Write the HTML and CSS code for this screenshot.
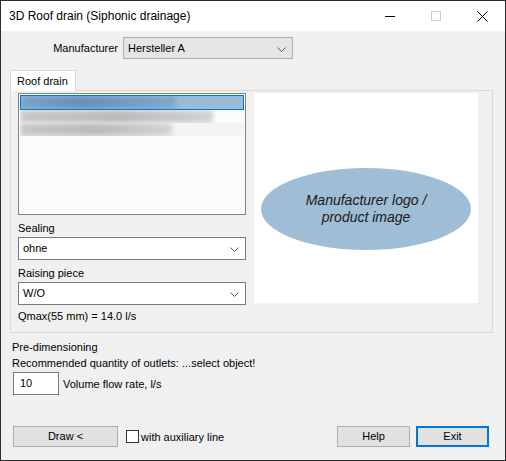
FILE: index.html
```html
<!DOCTYPE html>
<html>
<head>
<meta charset="UTF-8">
<title>3D Roof drain (Siphonic drainage)</title>
<link rel="stylesheet" href="styles.css">
</head>
<body>
<div class="window">
	<div class="titlebar">
		<div class="title">3D Roof drain (Siphonic drainage)</div>
		<div class="caption_btn"><svg width="10" height="10"><path d="M0 5.5h10" stroke="#000" stroke-width="1"/></svg></div>
		<div class="caption_btn"><svg width="10" height="10"><rect x="0.5" y="0.5" width="9" height="9" fill="none" stroke="#ccc"/></svg></div>
		<div class="caption_btn"><svg width="11" height="11"><path d="M0.5 0.5l10 10M10.5 0.5l-10 10" stroke="#000" stroke-width="1"/></svg></div>
	</div>
	<div class="content">
		<div class="mfr_row">
			<span class="mfr_label">Manufacturer</span>
			<div class="combo combo_mfr">Hersteller A<svg class="arrow" width="9" height="5"><path d="M0.5 0.5l4 4 4-4" fill="none" stroke="#555"/></svg></div>
		</div>
		<div class="tabs">
			<div class="tab">Roof drain</div>
		</div>
		<div class="panel">
			<div class="left_col">
				<div class="listbox">
					<div class="row row_sel"><span class="blur blur_blue"></span></div>
					<div class="row"><span class="blur blur_gray w1"></span></div>
					<div class="row row_alt"><span class="blur blur_gray w2"></span></div>
				</div>
				<div class="field_label">Sealing</div>
				<div class="combo">ohne<svg class="arrow" width="9" height="5"><path d="M0.5 0.5l4 4 4-4" fill="none" stroke="#555"/></svg></div>
				<div class="field_label">Raising piece</div>
				<div class="combo">W/O<svg class="arrow" width="9" height="5"><path d="M0.5 0.5l4 4 4-4" fill="none" stroke="#555"/></svg></div>
				<div class="qmax">Qmax(55 mm) = 14.0 l/s</div>
			</div>
			<div class="image_box">
				<div class="logo">Manufacturer logo /<br>product image</div>
			</div>
		</div>
		<div class="pre">Pre-dimensioning</div>
		<div class="pre_text">Recommended quantity of outlets: ...select object!</div>
		<div class="flow_row">
			<div class="edit">10</div>
			<span>Volume flow rate, l/s</span>
		</div>
		<div class="buttons">
			<div class="btn btn_draw">Draw &lt;</div>
			<label class="check"><span class="box"></span>with auxiliary line</label>
			<div class="btn btn_help">Help</div>
			<div class="btn btn_exit">Exit</div>
		</div>
	</div>
</div>
</body>
</html>
```

FILE: styles.css
```css
*{margin:0;padding:0;box-sizing:border-box;}
body{background:#f0f0f0;font-family:"Liberation Sans",Arial,sans-serif;font-size:11px;color:#000;}
.window{width:506px;height:461px;border:1px solid #2b2b2b;background:#f0f0f0;display:flex;flex-direction:column;}
.titlebar{height:30px;background:#fff;display:flex;align-items:center;}
.title{flex:1;padding-left:8px;font-size:12px;}
.caption_btn{width:46px;height:30px;display:flex;align-items:center;justify-content:center;}
.content{flex:1;padding:6px 16px 0 9px;}
.mfr_row{display:flex;align-items:center;height:22px;}
.mfr_label{width:108px;text-align:right;margin-right:5px;}
.combo{position:relative;height:23px;border:1px solid #7a7a7a;background:#fff;padding-left:4px;line-height:21px;}
.combo .arrow{position:absolute;right:6px;top:9px;}
.combo_mfr{width:170px;height:22px;line-height:20px;background:#e5e5e5;border-color:#adadad;}
.tabs{display:flex;margin-top:11px;height:21px;}
.tab{width:66px;height:21px;background:#fff;border:1px solid #d9d9d9;border-bottom:none;padding:4px 0 0 6px;position:relative;z-index:1;}
.panel{width:483px;height:243px;border:1px solid #d9d9d9;margin-top:-1px;display:flex;padding:2px 0 0 7px;gap:8px;}
.left_col{width:228px;}
.listbox{height:122px;border:1px solid #828282;background:#fbfbfb;padding:1px;}
.row{height:13px;overflow:hidden;}
.row_sel{height:15px;background:#9bbcd9;border:1px solid #0078d7;}
.row_alt{background:#f4f4f4;}
.blur{display:block;height:100%;filter:blur(2.5px);}
.blur_blue{width:155px;background:linear-gradient(90deg,#7ba3c9,#6590b9 40%,#82a8cb);}
.blur_gray{background:linear-gradient(90deg,#c8c8c8,#b9b9b9 50%,#d3d3d3);}
.w1{width:193px;}
.w2{width:152px;}
.field_label{margin-top:7px;height:15px;}
.qmax{margin-top:5px;}
.image_box{width:224px;height:210px;background:#fff;display:flex;align-items:center;justify-content:center;padding-top:22px;}
.logo{width:210px;height:82px;border-radius:50%;background:#a0bdd6;font-style:italic;font-size:14px;color:#1a1a1a;text-align:center;line-height:17px;display:flex;align-items:center;justify-content:center;}
.pre{margin-top:8px;padding-left:2px;}
.pre_text{margin-top:4px;padding-left:2px;}
.flow_row{display:flex;align-items:center;margin-top:3px;padding-left:3px;}
.edit{width:46px;height:23px;border:1px solid #7a7a7a;background:#fff;padding-left:6px;line-height:21px;margin-right:4px;}
.buttons{display:flex;align-items:center;margin-top:31px;padding-left:3px;}
.btn{height:21px;border:1px solid #adadad;background:#e1e1e1;text-align:center;line-height:19px;}
.btn_draw{width:105px;}
.check{display:flex;align-items:center;margin-left:8px;width:100px;overflow:hidden;white-space:nowrap;}
.check .box{width:13px;height:13px;border:1px solid #333;background:#fff;margin-right:2px;flex:none;}
.btn_help{width:73px;margin-left:auto;}
.btn_exit{width:73px;margin-left:6px;border:2px solid #0078d7;line-height:17px;}
```
